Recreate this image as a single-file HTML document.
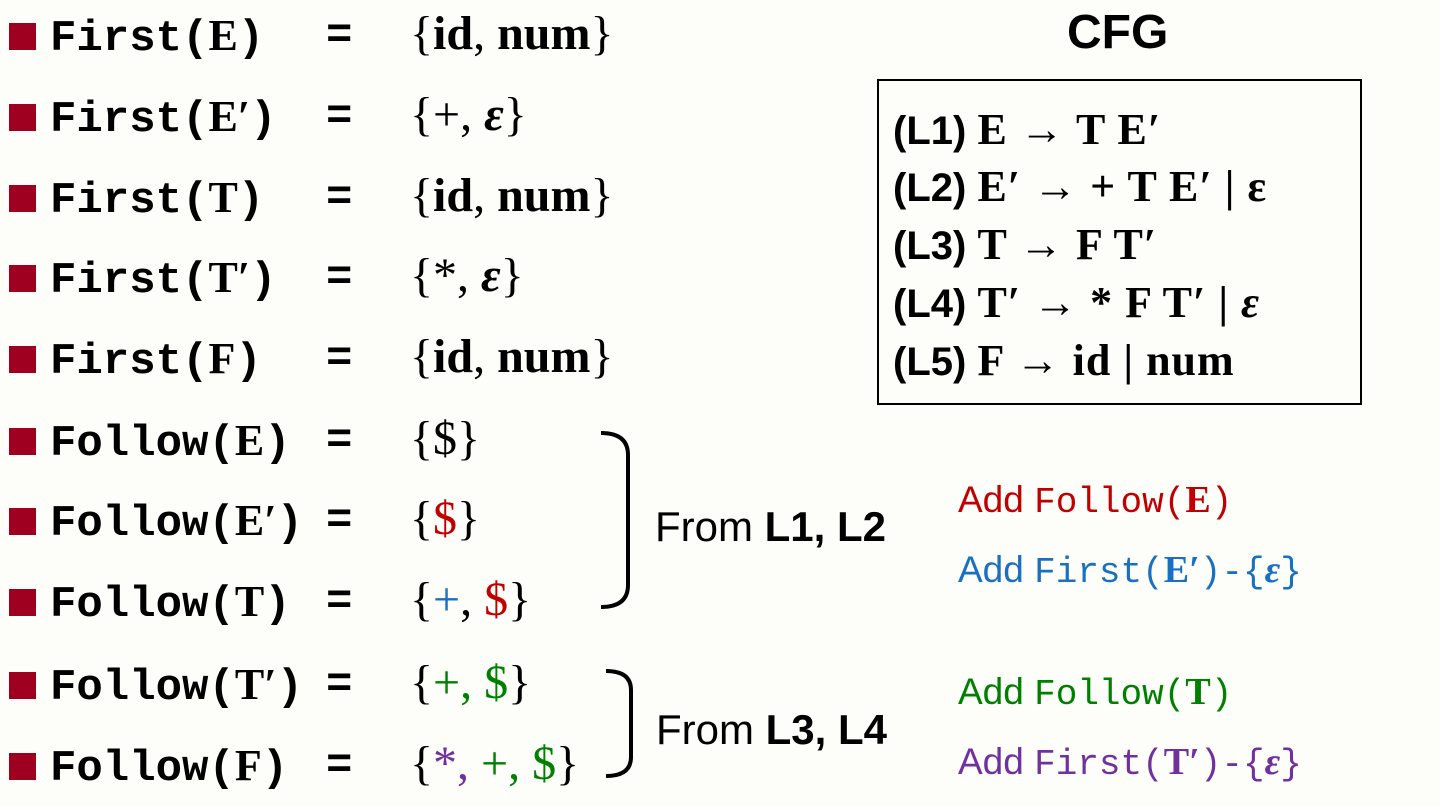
<!DOCTYPE html>
<html><head><meta charset="utf-8"><style>
html,body{margin:0;padding:0}
body{width:1440px;height:806px;background:#fdfdf9;position:relative;overflow:hidden;font-family:"Liberation Sans",sans-serif}
.r{position:absolute;left:0;height:60px;width:900px}
.b{position:absolute;left:9px;top:17px;width:27px;height:27px;background:#a00020}
.n{position:absolute;left:50px;top:0;font:bold 44px/60px "Liberation Mono",monospace;color:#000;white-space:pre}
.s{font-family:"Liberation Serif",serif;font-weight:bold}
.eq{position:absolute;left:326px;top:0;font:bold 44px/60px "Liberation Mono",monospace}
.v{position:absolute;left:410px;top:-2px;font:48px/60px "Liberation Serif",serif;white-space:pre}
.v b{font-weight:bold}
.t{position:absolute;white-space:pre}
.box{position:absolute;left:877px;top:79px;width:481px;height:322px;border:2px solid #000}
.cl{position:absolute;left:893px;font:bold 40px/50px "Liberation Sans",sans-serif;white-space:pre}
.cl span{font-family:"Liberation Serif",serif;font-size:44px;letter-spacing:1px}
.a{position:absolute;left:958px;font:37px/44px "Liberation Sans",sans-serif;white-space:pre}
.a .m{font-family:"Liberation Mono",monospace;font-size:36px}
.a .s{font-size:38px}
</style></head><body>
<div class="r" style="top:6px"><div class="b"></div><div class="n">First(<span class="s">E</span>)</div><div class="eq">=</div><div class="v">{<b>id</b>, <b>num</b>}</div></div>
<div class="r" style="top:87px"><div class="b"></div><div class="n">First(<span class="s">E′</span>)</div><div class="eq">=</div><div class="v">{+, <b><i>ε</i></b>}</div></div>
<div class="r" style="top:168px"><div class="b"></div><div class="n">First(<span class="s">T</span>)</div><div class="eq">=</div><div class="v">{<b>id</b>, <b>num</b>}</div></div>
<div class="r" style="top:248px"><div class="b"></div><div class="n">First(<span class="s">T′</span>)</div><div class="eq">=</div><div class="v">{*, <b><i>ε</i></b>}</div></div>
<div class="r" style="top:329px"><div class="b"></div><div class="n">First(<span class="s">F</span>)</div><div class="eq">=</div><div class="v">{<b>id</b>, <b>num</b>}</div></div>
<div class="r" style="top:411px"><div class="b"></div><div class="n">Follow(<span class="s">E</span>)</div><div class="eq">=</div><div class="v">{$}</div></div>
<div class="r" style="top:491px"><div class="b"></div><div class="n">Follow(<span class="s">E′</span>)</div><div class="eq">=</div><div class="v">{<span style="color:#c00000">$</span>}</div></div>
<div class="r" style="top:572px"><div class="b"></div><div class="n">Follow(<span class="s">T</span>)</div><div class="eq">=</div><div class="v">{<span style="color:#1a70c0">+</span>, <span style="color:#c00000">$</span>}</div></div>
<div class="r" style="top:655px"><div class="b"></div><div class="n">Follow(<span class="s">T′</span>)</div><div class="eq">=</div><div class="v">{<span style="color:#008000">+, $</span>}</div></div>
<div class="r" style="top:736px"><div class="b"></div><div class="n">Follow(<span class="s">F</span>)</div><div class="eq">=</div><div class="v">{<span style="color:#7030a0">*,</span> <span style="color:#008000">+, $</span>}</div></div>

<div class="t" style="left:1067px;top:5px;font:bold 48px/56px 'Liberation Sans',sans-serif">CFG</div>
<div class="box"></div>
<div class="cl" style="top:105px">(L1) <span>E → T E′</span></div>
<div class="cl" style="top:162px">(L2) <span>E′ → + T E′ | ε</span></div>
<div class="cl" style="top:220px">(L3) <span>T → F T′</span></div>
<div class="cl" style="top:278px">(L4) <span>T′ → * F T′ | <i>ε</i></span></div>
<div class="cl" style="top:336px">(L5) <span>F → id | num</span></div>

<svg style="position:absolute;left:0;top:0" width="1440" height="806">
<path d="M601 433 Q628 433 628 455 L628 585 Q628 607 601 607" fill="none" stroke="#000" stroke-width="4"/>
<path d="M606 671 Q631 671 631 690 L631 757 Q631 776 606 776" fill="none" stroke="#000" stroke-width="4"/>
</svg>
<div class="t" style="left:655px;top:502px;font:42px/50px 'Liberation Sans',sans-serif">From <b>L1, L2</b></div>
<div class="t" style="left:656px;top:705px;font:42px/50px 'Liberation Sans',sans-serif">From <b>L3, L4</b></div>

<div class="a" style="top:478px;color:#c00000">Add <span class="m">Follow(</span><span class="s"><b>E</b></span><span class="m">)</span></div>
<div class="a" style="top:548px;color:#1a70c0">Add <span class="m">First(</span><span class="s"><b>E′</b></span><span class="m">)-{</span><span class="s"><b><i>ε</i></b></span><span class="m">}</span></div>
<div class="a" style="top:670px;color:#008000">Add <span class="m">Follow(</span><span class="s"><b>T</b></span><span class="m">)</span></div>
<div class="a" style="top:740px;color:#7030a0">Add <span class="m">First(</span><span class="s"><b>T′</b></span><span class="m">)-{</span><span class="s"><b><i>ε</i></b></span><span class="m">}</span></div>
</body></html>
